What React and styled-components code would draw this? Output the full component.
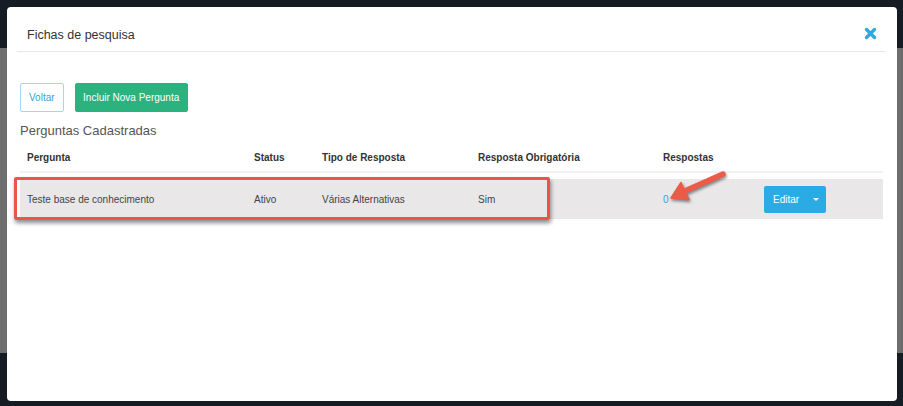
import React from 'react'
import styled, { createGlobalStyle } from 'styled-components'

const GlobalStyle = createGlobalStyle`
  html, body {
    margin: 0;
    padding: 0;
  }
  body {
    width: 903px;
    height: 406px;
    overflow: hidden;
    font-family: "Liberation Sans", Arial, sans-serif;
    background: linear-gradient(
      to bottom,
      #151c24 0px,
      #151c24 48px,
      #6e6e6e 48px,
      #6e6e6e 353px,
      #151c24 353px
    );
  }
`

const Backdrop = styled.div`
  padding: 7px 6px 5px 7px;
  box-sizing: border-box;
  height: 406px;
`

const Modal = styled.div`
  position: relative;
  height: 394px;
  background: #fff;
  border-radius: 4px;
  padding: 0 11px 0 10px;
  box-sizing: border-box;
`

const Header = styled.div`
  height: 45px;
  box-sizing: border-box;
  padding: 20px 9px 0 10px;
  border-bottom: 1px solid #e7e7e7;
  display: flex;
  justify-content: space-between;
  align-items: flex-start;
`

const Title = styled.h4`
  margin: 0;
  font-size: 12.5px;
  line-height: 16px;
  font-weight: normal;
  color: #333;
`

const CloseButton = styled.button`
  border: 0;
  background: none;
  padding: 0;
  width: 13px;
  height: 13px;
  cursor: pointer;
  display: flex;
`

const Body = styled.div`
  padding: 31px 3px 0 3px;
`

const Toolbar = styled.div`
  display: flex;
  gap: 11px;
`

const Button = styled.button`
  height: 29px;
  box-sizing: border-box;
  padding: 0 ${p => (p.$primary ? '7.5px' : '8px')};
  font-family: "Liberation Sans", Arial, sans-serif;
  font-size: 10px;
  border-radius: 2px;
  cursor: pointer;
  border: 1px solid ${p => (p.$primary ? '#2bb27e' : '#a5d6f0')};
  background: ${p => (p.$primary ? '#2bb27e' : '#fff')};
  color: ${p => (p.$primary ? '#fff' : '#3b9fd6')};
`

const SectionTitle = styled.h3`
  margin: 10px 0 0;
  font-size: 13px;
  line-height: 18px;
  font-weight: normal;
  color: #555;
`

const Table = styled.div`
  margin-top: 8px;
`

const Row = styled.div`
  position: relative;
  display: grid;
  grid-template-columns: 227px 68px 156px 185px 101px 1fr;
  align-items: center;
  font-size: 10px;
`

const HeadRow = styled(Row)`
  padding: 3px 0 6px;
  line-height: 14px;
  border-bottom: 2px solid #f1f1f1;
  font-weight: bold;
  color: #333;
`

const DataRow = styled(Row)`
  margin-top: 6px;
  height: 40px;
  background: #e9e7e8;
  color: #444;
`

const Cell = styled.div`
  padding-left: 7px;
  white-space: nowrap;
`

const CountLink = styled.a`
  color: #3c9fdb;
  text-decoration: none;
`

const SplitButton = styled.div`
  display: flex;
  width: 62px;
  height: 27px;
  background: #2aabe3;
  border-radius: 2px;
  color: #fff;
  font-size: 10px;
  align-items: center;
`

const SplitLabel = styled.span`
  padding-left: 9px;
  flex: 1;
`

const Caret = styled.span`
  width: 0;
  height: 0;
  margin-right: 7px;
  border-left: 3px solid transparent;
  border-right: 3px solid transparent;
  border-top: 3px solid #fff;
`

const Highlight = styled.div`
  position: absolute;
  left: -6px;
  top: -2px;
  width: 536px;
  height: 43px;
  box-sizing: border-box;
  border: 3px solid #ea5547;
  border-radius: 2px;
  box-shadow: 1px 3px 4px rgba(0, 0, 0, 0.45);
  pointer-events: none;
`

const Arrow = styled.svg`
  position: absolute;
  left: 643px;
  top: -15px;
  width: 90px;
  height: 40px;
  overflow: visible;
  filter: drop-shadow(1px 2px 1.5px rgba(0, 0, 0, 0.45));
`

function CloseIcon() {
  return (
    <svg width="13" height="13" viewBox="0 0 13 13">
      <path d="M2.5 2.5 L10.5 10.5 M10.5 2.5 L2.5 10.5" stroke="#2fa9e0" strokeWidth="3.4" strokeLinecap="round" />
    </svg>
  )
}

const questions = [
  { pergunta: 'Teste base de conhecimento', status: 'Ativo', tipo: 'Várias Alternativas', obrigatoria: 'Sim', respostas: 0 }
]

export default function App() {
  return (
    <>
      <GlobalStyle />
      <Backdrop>
        <Modal>
          <Header>
            <Title>Fichas de pesquisa</Title>
            <CloseButton aria-label="Fechar"><CloseIcon /></CloseButton>
          </Header>
          <Body>
            <Toolbar>
              <Button>Voltar</Button>
              <Button $primary>Incluir Nova Pergunta</Button>
            </Toolbar>
            <SectionTitle>Perguntas Cadastradas</SectionTitle>
            <Table>
              <HeadRow>
                <Cell>Pergunta</Cell>
                <Cell>Status</Cell>
                <Cell>Tipo de Resposta</Cell>
                <Cell>Resposta Obrigatória</Cell>
                <Cell>Respostas</Cell>
                <Cell />
              </HeadRow>
              {questions.map(q => (
                <DataRow key={q.pergunta}>
                  <Cell>{q.pergunta}</Cell>
                  <Cell>{q.status}</Cell>
                  <Cell>{q.tipo}</Cell>
                  <Cell>{q.obrigatoria}</Cell>
                  <Cell><CountLink href="#">{q.respostas}</CountLink></Cell>
                  <Cell>
                    <SplitButton>
                      <SplitLabel>Editar</SplitLabel>
                      <Caret />
                    </SplitButton>
                  </Cell>
                  <Highlight />
                  <Arrow viewBox="0 0 90 40">
                    <path d="M60 10 L24 26" stroke="#ec5a48" strokeWidth="5.5" strokeLinecap="round" />
                    <polygon points="8,34 26,35.5 18,18.5" fill="#ec5a48" stroke="#ec5a48" strokeWidth="1.5" strokeLinejoin="round" />
                  </Arrow>
                </DataRow>
              ))}
            </Table>
          </Body>
        </Modal>
      </Backdrop>
    </>
  )
}
